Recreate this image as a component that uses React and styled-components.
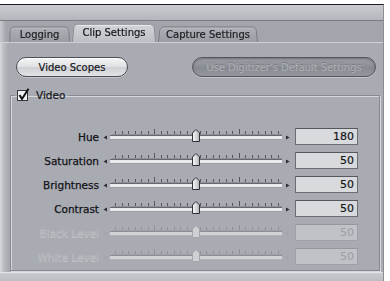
import React from "react";
import styled, { createGlobalStyle } from "styled-components";

const Global = createGlobalStyle`
  html, body { margin: 0; padding: 0; background: #ffffff; }
  body { font-family: "DejaVu Sans", "Liberation Sans", sans-serif; }
  #root { width: 390px; height: 281px; overflow: hidden; }
`;

const Stage = styled.div`
  width: 390px;
  height: 281px;
  padding-top: 4px;
  box-sizing: border-box;
  background: #ffffff;
  overflow: hidden;
`;

const Window = styled.div`
  width: 384px;
  height: 277px;
  box-sizing: border-box;
  border-top: 1px solid #1c1c1f;
  border-right: 1px solid #8b8d93;
  background: linear-gradient(to right, #d9dadd 0, #bfc1c6 3px, #a9abb2 8px, #a9abb2 100%);
  display: flex;
  flex-direction: column;
`;

const TitleStrip = styled.div`
  height: 15px;
  flex: none;
  background: linear-gradient(#cbccd1, #b4b6bc);
  border-bottom: 1px solid #7b7d84;
`;

const TabBar = styled.div`
  height: 22px;
  flex: none;
  box-sizing: border-box;
  display: flex;
  align-items: flex-end;
  padding-left: 8px;
  background: linear-gradient(to right, #c9cacf 0, #a3a5ac 6px, #a3a5ac 100%);
  border-bottom: 1px solid #cfd0d4;
`;

const Tab = styled.div`
  position: relative;
  z-index: ${(p) => (p.$active ? 2 : 1)};
  width: ${(p) => p.$w}px;
  height: ${(p) => (p.$active ? 19 : 16)}px;
  display: flex;
  align-items: center;
  justify-content: center;
  font-size: 10px;
  -webkit-text-stroke: 0.2px currentColor;
  color: ${(p) => (p.$active ? "#15161a" : "#202126")};
  padding-top: ${(p) => (p.$active ? 0 : 1)}px;
  box-sizing: border-box;

  &::before {
    content: "";
    position: absolute;
    inset: 0 1px 0 1px;
    z-index: -1;
    border: 1px solid ${(p) => (p.$active ? "#8a8c92" : "#7a7c83")};
    border-bottom: none;
    border-radius: 5px 5px 0 0;
    background: ${(p) =>
      p.$active
        ? "linear-gradient(#d3d4d8, #bdbfc5)"
        : "linear-gradient(#aeb0b6, #9b9da4)"};
    box-shadow: inset 0 1px 0 ${(p) => (p.$active ? "#eeeff1" : "#c3c5ca")};
    transform: perspective(40px) rotateX(5deg);
    transform-origin: bottom;
  }
`;

const Content = styled.div`
  flex: 1;
  display: flex;
  flex-direction: column;
  padding-top: 14px;
`;

const ButtonRow = styled.div`
  display: flex;
  align-items: center;
  padding: 0 7px 0 16px;
`;

const PillButton = styled.div`
  width: ${(p) => p.$w}px;
  height: 20px;
  box-sizing: border-box;
  border-radius: 10px;
  border: 1px solid ${(p) => (p.$disabled ? "#55575d" : "#4b4d53")};
  display: flex;
  align-items: center;
  justify-content: center;
  font-size: 10px;
  -webkit-text-stroke: 0.2px currentColor;
  margin-left: ${(p) => (p.$push ? "auto" : "0")};
  color: ${(p) => (p.$disabled ? "#acaeb4" : "#16171b")};
  background: ${(p) =>
    p.$disabled
      ? "linear-gradient(#9c9ea5, #8d8f96 50%, #878990 51%, #95979e)"
      : "linear-gradient(#f3f4f5, #dfe0e3 50%, #cfd0d4 51%, #e2e3e6)"};
  box-shadow: ${(p) =>
    p.$disabled
      ? "inset 0 1px 2px #6f7178, 0 1px 0 #c4c6cb"
      : "inset 0 1px 0 #ffffff, 0 1px 0 #c4c6cb"};
  text-shadow: ${(p) => (p.$disabled ? "0 -1px 0 #7a7c82" : "none")};
`;

const Group = styled.fieldset`
  margin: 11px 0 0 10px;
  width: 370px;
  height: 183px;
  box-sizing: border-box;
  padding: 0;
  min-width: 0;
  border: 1px solid #878990;
  box-shadow: inset 1px 1px 0 #d6d7db, 1px 1px 0 #d6d7db;
`;

const Legend = styled.legend`
  margin-left: 4px;
  padding: 0 3px 0 1px;
  height: 14px;
  display: flex;
  align-items: center;
  gap: 6px;
  font-size: 10.5px;
  -webkit-text-stroke: 0.2px currentColor;
  color: #15161a;
`;

const Rows = styled.div`
  display: flex;
  flex-direction: column;
  gap: 7px;
  padding-top: 26px;
`;

const Row = styled.div`
  display: grid;
  grid-template-columns: 89px 195px 63px;
  align-items: center;
  height: 17px;
`;

const Label = styled.span`
  text-align: right;
  white-space: nowrap;
  font-size: 10.5px;
  padding-right: 1px;
  -webkit-text-stroke: 0.25px currentColor;
  color: ${(p) => (p.$disabled ? "#b4b6bc" : "#111216")};
  text-shadow: ${(p) => (p.$disabled ? "0 1px 0 #c2c4c8" : "none")};
`;

const Field = styled.div`
  height: 17px;
  box-sizing: border-box;
  border: 1px solid ${(p) => (p.$disabled ? "#9fa1a7" : "#6b6d73")};
  border-top-color: ${(p) => (p.$disabled ? "#94969c" : "#55575d")};
  background: ${(p) => (p.$disabled ? "#c0c2c7" : "#d9dadd")};
  color: ${(p) => (p.$disabled ? "#a1a3a9" : "#15161a")};
  text-align: right;
  padding-right: 3px;
  font-size: 11px;
  line-height: 15px;
  -webkit-text-stroke: 0.2px currentColor;
`;

const Footer = styled.div`
  flex: 1;
  margin-top: 1px;
  background: linear-gradient(#c9cacf, #bcbec3);
  border-top: 1px solid #e2e3e6;
`;

function CheckBox() {
  return (
    <svg width="14" height="14" viewBox="0 0 14 14">
      <rect x="1.5" y="2.5" width="10" height="10" fill="#eeeff1" stroke="#36383d" />
      <path d="M3.5 7 L6 11 L12.5 0.8" fill="none" stroke="#101114" strokeWidth="2" />
    </svg>
  );
}

function Slider({ disabled }) {
  const tickColor = disabled ? "#8f9197" : "#53555b";
  const ticks = [];
  for (let i = 0; i < 26; i++) {
    const x = Math.round(15 + i * 6.5) + 0.5;
    const major = i === 6 || i === 19;
    ticks.push(<line key={i} x1={x} x2={x} y1={major ? 1 : 3} y2={7} />);
  }
  return (
    <svg width="195" height="17" viewBox="0 0 195 17">
      <g stroke={tickColor} strokeWidth="1">{ticks}</g>
      <line x1="12" x2="182" y1="6.5" y2="6.5" stroke={disabled ? "#9ea0a6" : "#8e9096"} />
      <rect x="10" y="8" width="172" height="3" fill={disabled ? "#d2d3d6" : "#e9eaec"} />
      <line x1="10" x2="182" y1="7.5" y2="7.5" stroke={disabled ? "#8d8f95" : "#66686e"} />
      <line x1="10" x2="182" y1="11.5" y2="11.5" stroke={disabled ? "#b2b4b9" : "#9a9ca2"} />
      <polygon points="7,7.5 3.5,9.5 7,11.5" fill={disabled ? "#a3a5ab" : "#2b2d31"} />
      <polygon points="186,7.5 189.5,9.5 186,11.5" fill={disabled ? "#a3a5ab" : "#2b2d31"} />
      <defs>
        <linearGradient id="thumbG" x1="0" x2="1" y1="0" y2="0">
          <stop offset="0" stopColor="#fbfbfc" />
          <stop offset="1" stopColor="#b4b6bb" />
        </linearGradient>
      </defs>
      <path
        d="M92.5 13.5 L92.5 5 L96 1.5 L99.5 5 L99.5 13.5 Z"
        fill={disabled ? "#cfd0d4" : "url(#thumbG)"}
        stroke={disabled ? "#a4a6ac" : "#303236"}
      />
    </svg>
  );
}

const sliders = [
  { label: "Hue", value: 180 },
  { label: "Saturation", value: 50 },
  { label: "Brightness", value: 50 },
  { label: "Contrast", value: 50 },
  { label: "Black Level", value: 50, disabled: true },
  { label: "White Level", value: 50, disabled: true },
];

export default function App() {
  return (
    <>
      <Global />
      <Stage>
        <Window>
          <TitleStrip />
          <TabBar>
            <Tab $w={63}>Logging</Tab>
            <Tab $w={86} $active>Clip Settings</Tab>
            <Tab $w={102}>Capture Settings</Tab>
          </TabBar>
          <Content>
            <ButtonRow>
              <PillButton $w={112}>Video Scopes</PillButton>
              <PillButton $w={184} $push $disabled>
                Use Digitizer's Default Settings
              </PillButton>
            </ButtonRow>
            <Group>
              <Legend>
                <CheckBox />
                <span>Video</span>
              </Legend>
              <Rows>
                {sliders.map((s) => (
                  <Row key={s.label}>
                    <Label $disabled={s.disabled}>{s.label}</Label>
                    <Slider disabled={s.disabled} />
                    <Field $disabled={s.disabled}>{s.value}</Field>
                  </Row>
                ))}
              </Rows>
            </Group>
            <Footer />
          </Content>
        </Window>
      </Stage>
    </>
  );
}
